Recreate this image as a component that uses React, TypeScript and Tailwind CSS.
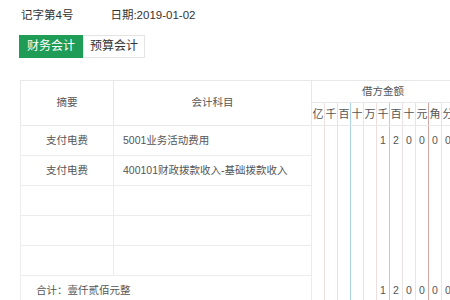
import React from 'react';

const digits = ['亿', '千', '百', '十', '万', '千', '百', '十', '元', '角', '分'];

// left border colour of each digit column
const lineColors = [
  'border-l-[#e3e3e3]',
  'border-l-[#efdede]',
  'border-l-[#efdede]',
  'border-l-[#a9d3e6]',
  'border-l-[#ebe3e3]',
  'border-l-[#efdede]',
  'border-l-[#a9d3e6]',
  'border-l-[#ebe3e3]',
  'border-l-[#ebe3e3]',
  'border-l-[#d7a6a0]',
  'border-l-[#ebe3e3]',
];

const rows = [
  { summary: '支付电费', subject: '5001业务活动费用', amount: '120000' },
  { summary: '支付电费', subject: '400101财政拨款收入-基础拨款收入', amount: '' },
  { summary: '', subject: '', amount: '' },
  { summary: '', subject: '', amount: '' },
  { summary: '', subject: '', amount: '' },
];

const AmountCells: React.FC<{ amount: string }> = ({ amount }) => {
  const padded = amount.padStart(digits.length, ' ');
  return (
    <>
      {digits.map((_, i) => (
        <td key={i} className={`border-l ${lineColors[i]} text-center p-0 text-[#555]`}>
          {amount ? padded[i].trim() : ''}
        </td>
      ))}
    </>
  );
};

export default function App() {
  return (
    <div
      className="w-[450px] h-[300px] overflow-hidden bg-white text-[#333]"
      style={{ fontFamily: '"Liberation Sans", "Noto Sans CJK SC", sans-serif' }}
    >
      <div className="pl-[21px] pt-[7px] flex items-center h-[23px] leading-[16px] text-[11.5px]">
        <span>记字第4号</span>
        <span className="ml-[37px]">日期:2019-01-02</span>
      </div>

      <div className="flex ml-[19px] mt-[12px] h-[23px] text-[12px]">
        <button className="w-[64px] h-full bg-[#1f9d57] text-white leading-[23px]">财务会计</button>
        <button className="w-[62px] h-full bg-white border border-[#e4e4e4] text-[#333] leading-[21px]">预算会计</button>
      </div>

      <div className="ml-[20px] mt-[22px] w-[430px] overflow-hidden">
        <table className="table-fixed border-collapse w-[450px] text-[#555] text-[10.5px]">
          <colgroup>
            <col className="w-[93px]" />
            <col className="w-[198px]" />
            {digits.map((_, i) => (
              <col key={i} className="w-[13px]" />
            ))}
            <col className="w-[146px]" />
          </colgroup>
          <thead>
            <tr className="h-[22px]">
              <th rowSpan={2} className="font-normal border border-[#e8e8e8] text-center">摘要</th>
              <th rowSpan={2} className="font-normal border border-[#e8e8e8] text-center">会计科目</th>
              <th colSpan={11} className="font-normal border border-[#e8e8e8] text-center">借方金额</th>
              <th className="border border-[#e8e8e8]"></th>
            </tr>
            <tr className="h-[23px]">
              {digits.map((d, i) => (
                <th key={i} className={`font-normal p-0 text-center text-[11px] border-b border-b-[#e8e8e8] border-l ${lineColors[i]}`}>
                  {d}
                </th>
              ))}
              <th className="border border-[#e8e8e8]"></th>
            </tr>
          </thead>
          <tbody>
            {rows.map((r, idx) => (
              <tr key={idx} className="h-[30px]">
                <td className="border border-[#ececec] text-center">{r.summary}</td>
                <td className="border border-[#ececec] pl-[9px] whitespace-nowrap">{r.subject}</td>
                <AmountCells amount={r.amount} />
                <td className="border border-[#ececec]"></td>
              </tr>
            ))}
            <tr className="h-[30px]">
              <td colSpan={2} className="border border-[#ececec] pl-[15px]">合计：壹仟贰佰元整</td>
              <AmountCells amount="120000" />
              <td className="border border-[#ececec]"></td>
            </tr>
          </tbody>
        </table>
      </div>
    </div>
  );
}
